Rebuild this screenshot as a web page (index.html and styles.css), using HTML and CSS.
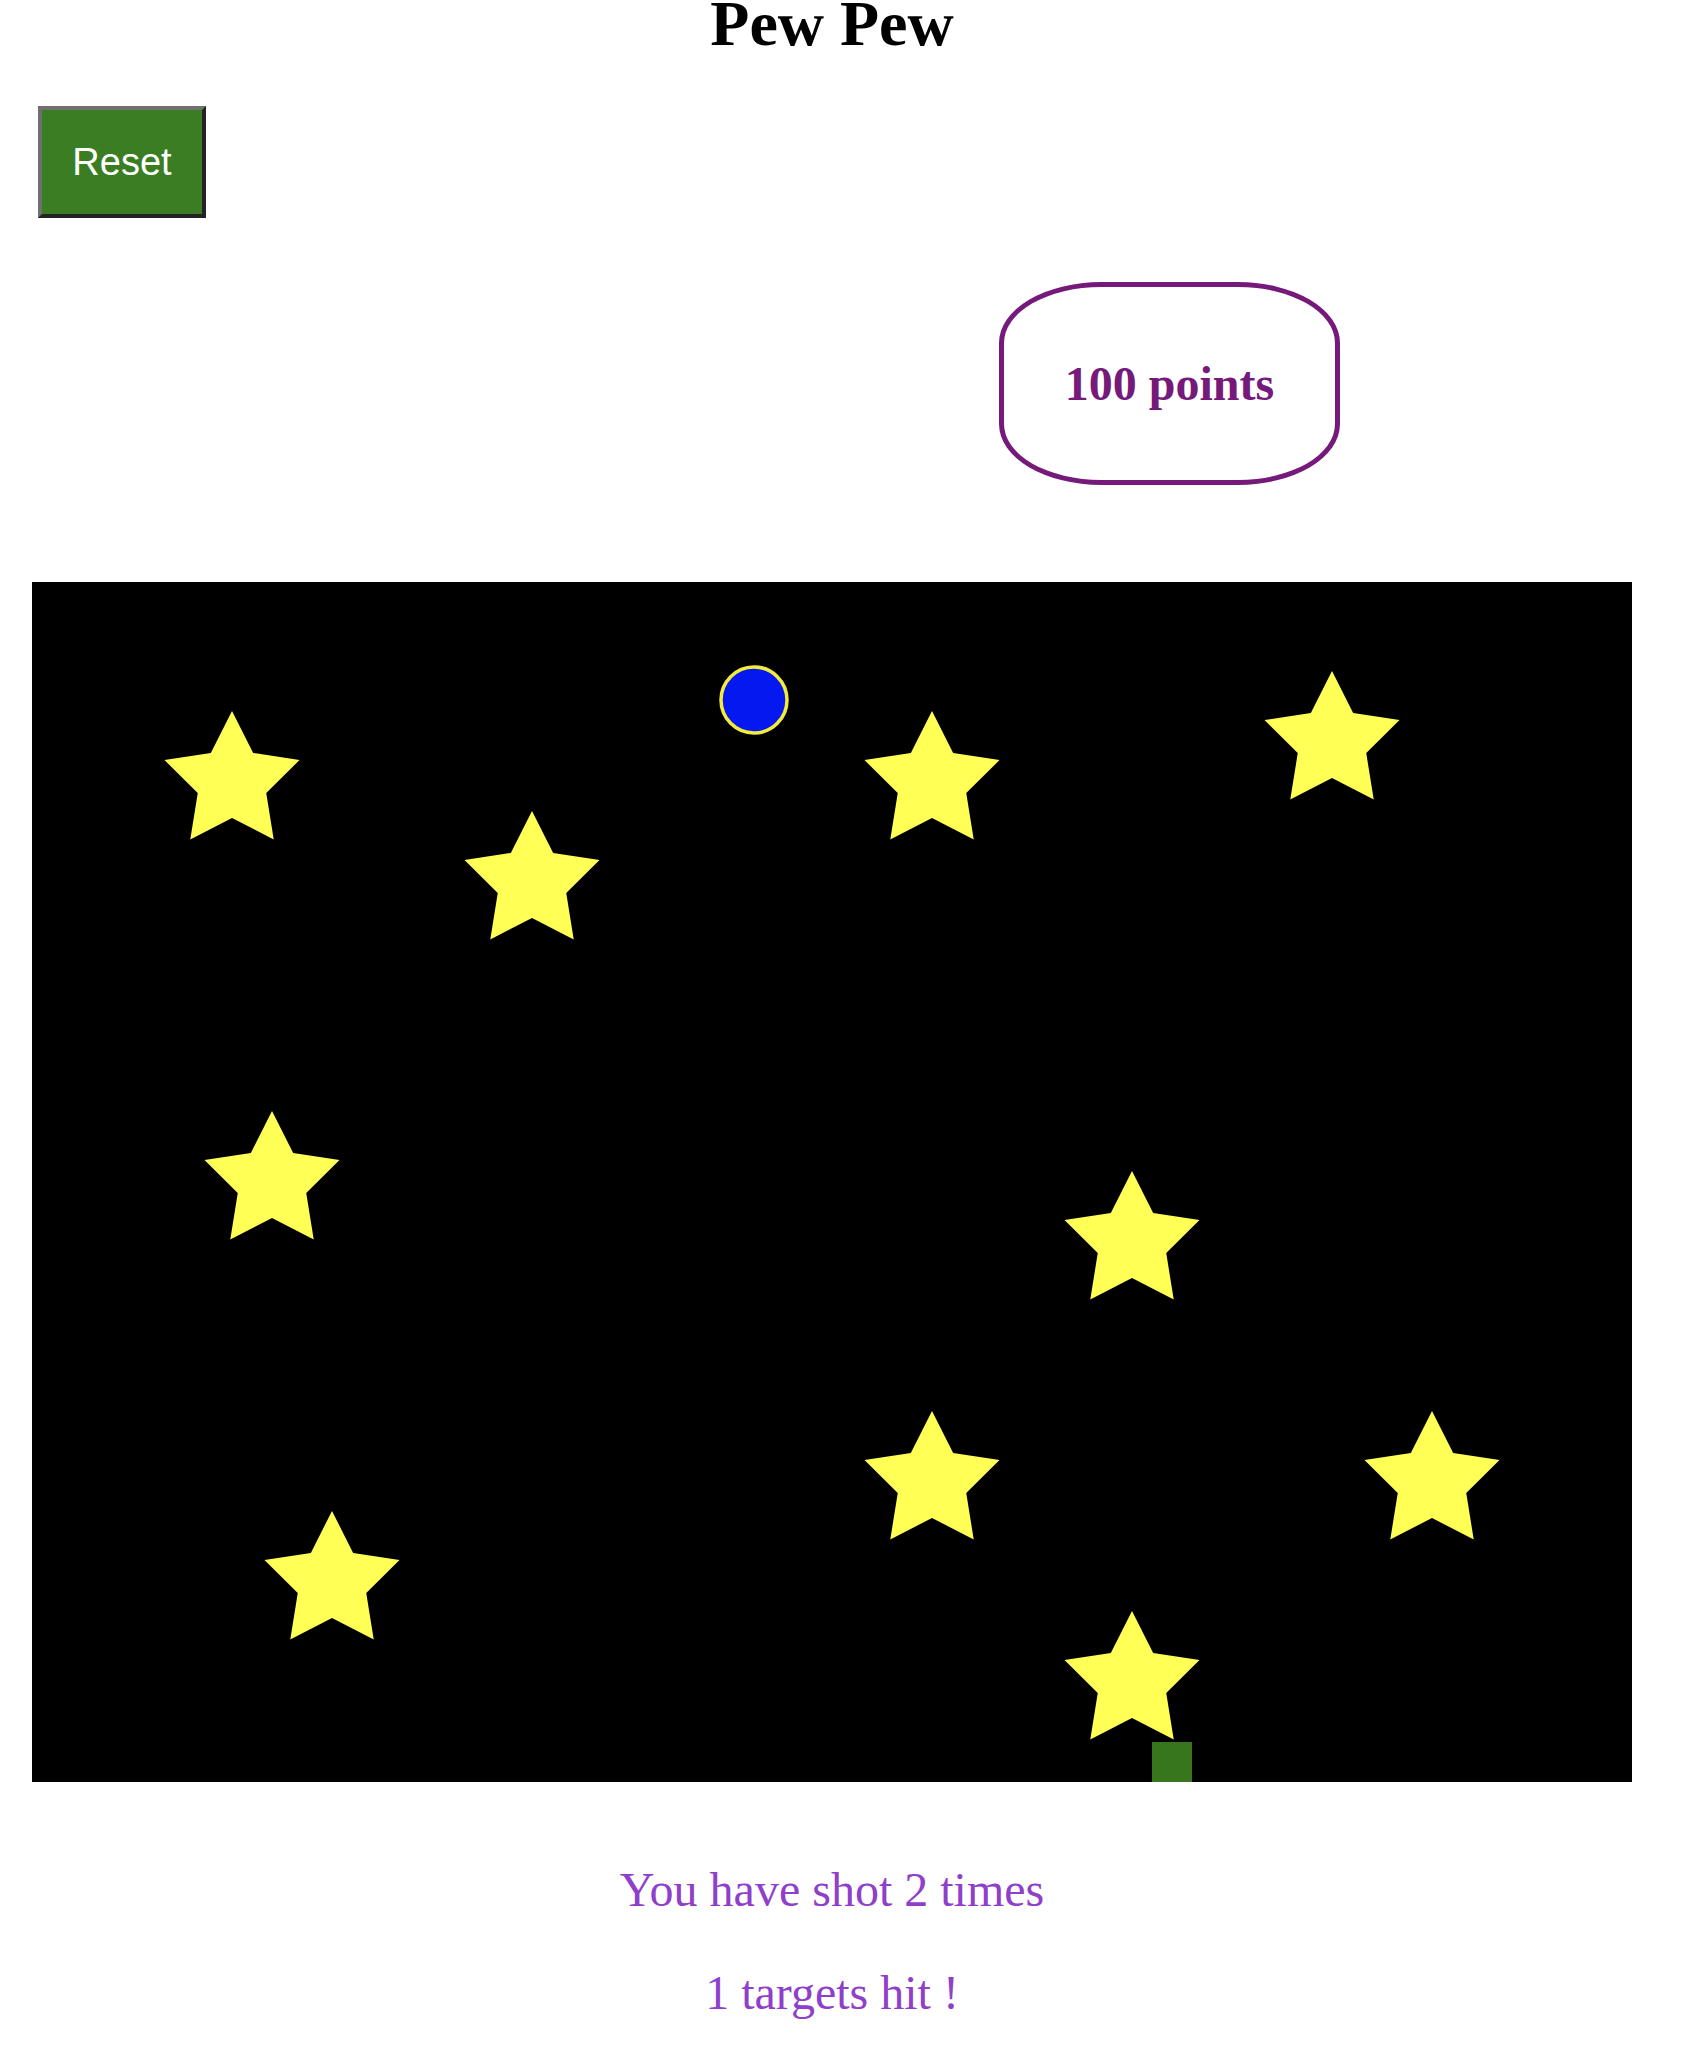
FILE: index.html
```html
<!DOCTYPE html>
<html>
<head>
<meta charset="utf-8">
<title>Pew Pew</title>
<link rel="stylesheet" href="styles.css">
</head>
<body>
<div class="page">
  <h1 class="title">Pew Pew</h1>
  <button class="reset">Reset</button>
  <div class="score">100 points</div>
  <svg class="board" width="1600" height="1200" viewBox="0 0 1600 1200" xmlns="http://www.w3.org/2000/svg">
    <defs>
      <polygon id="star" points="0,-71 21.16,-29.12 67.53,-21.94 34.24,11.12 41.73,57.44 0,36 -41.73,57.44 -34.24,11.12 -67.53,-21.94 -21.16,-29.12"/>
    </defs>
    <rect x="0" y="0" width="1600" height="1200" fill="#000"/>
    <g fill="#ffff55">
      <use href="#star" x="200" y="200"/>
      <use href="#star" x="500" y="300"/>
      <use href="#star" x="900" y="200"/>
      <use href="#star" x="1300" y="160"/>
      <use href="#star" x="240" y="600"/>
      <use href="#star" x="1100" y="660"/>
      <use href="#star" x="900" y="900"/>
      <use href="#star" x="1400" y="900"/>
      <use href="#star" x="300" y="1000"/>
      <use href="#star" x="1100" y="1100"/>
    </g>
    <circle cx="722" cy="118" r="33" fill="#0618f0" stroke="#f2ec3c" stroke-width="3.5"/>
    <rect x="1120" y="1160" width="40" height="40" fill="#38761d"/>
  </svg>
  <div class="stats">
    <p class="stat">You have shot 2 times</p>
    <p class="stat">1 targets hit !</p>
  </div>
</div>
</body>
</html>
```

FILE: styles.css
```css
html, body {
  background: #ffffff;
}

body {
  margin: 0;
  font-family: "Liberation Serif", "Times New Roman", serif;
}

.page {
  width: 1600px;
  margin-left: 32px;
}

.title {
  margin: 0;
  font-size: 64px;
  line-height: 48px;
  font-weight: bold;
  text-align: center;
  color: #000000;
}

.reset {
  display: block;
  box-sizing: border-box;
  width: 168px;
  height: 112px;
  margin: 58px 0 0 6px;
  padding: 0;
  background: #3a7d23;
  color: #ffffff;
  font-family: "Liberation Sans", Arial, sans-serif;
  font-size: 38px;
  border-style: solid;
  border-width: 4px;
  border-color: #707070 #232323 #232323 #707070;
  cursor: pointer;
}

.score {
  box-sizing: border-box;
  width: 341px;
  height: 203px;
  margin: 64px 0 0 967px;
  border: 5px solid #751a7b;
  border-radius: 30%;
  display: flex;
  align-items: center;
  justify-content: center;
  color: #751a7b;
  font-size: 48px;
  font-weight: bold;
}

.board {
  display: block;
  margin-top: 97px;
}

.stats {
  padding-top: 32px;
  text-align: center;
}

.stat {
  margin: 48px 0;
  font-size: 48px;
  color: #8f3fca;
}
```
